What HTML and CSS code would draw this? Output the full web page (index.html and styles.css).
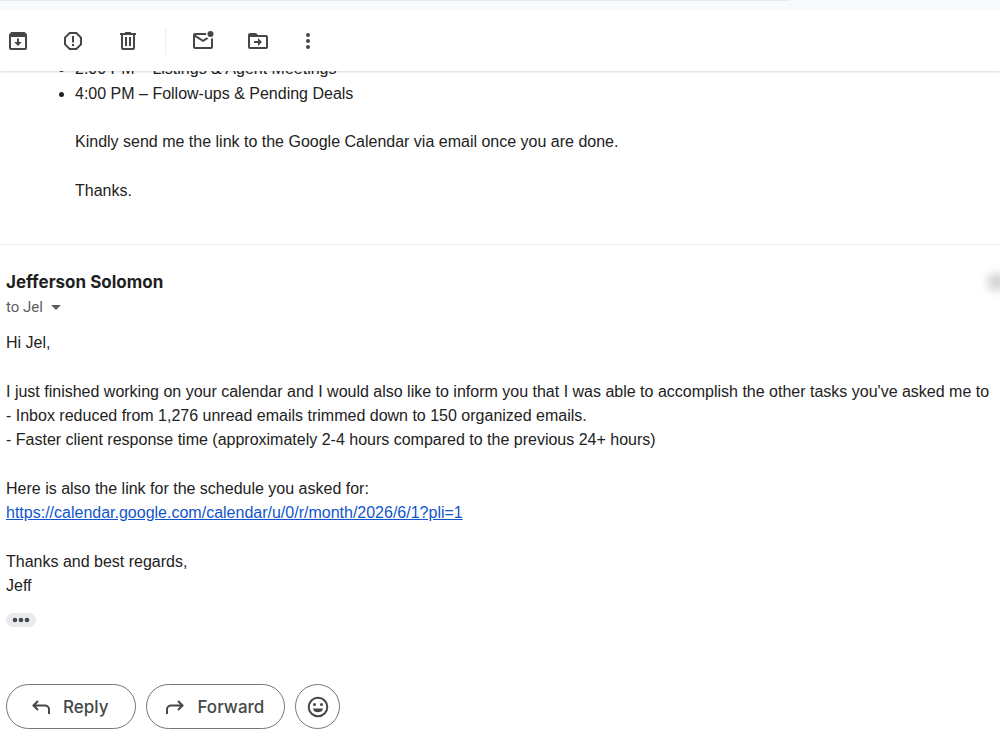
FILE: index.html
```html
<!DOCTYPE html>
<html lang="en">
	<head>
		<meta charset="utf-8">
		<title>Mail</title>
		<link rel="stylesheet" href="styles.css">
	</head>
	<body>
		<header class="top">
			<div class="searchbar"><div class="search-edge"></div></div>
			<div class="toolbar">
				<button type="button" class="tool" aria-label="Archive">
					<svg viewBox="0 0 24 24"><path d="M18.700 3H5.300L3 5.500V19a2 2 0 0 0 2 2h14a2 2 0 0 0 2-2V5.500zM19 19H5V8h14zM11 9.500h2V13h2.800L12 17l-3.800-4H11z"/></svg>
				</button>
				<button type="button" class="tool" aria-label="Report spam">
					<svg viewBox="0 0 24 24"><path fill-rule="evenodd" d="M15.730 3H8.270L3 8.270v7.460L8.270 21h7.460L21 15.730V8.270zM19 14.900L14.900 19H9.100L5 14.900V9.100L9.100 5h5.800L19 9.100zM11 7h2v6.500h-2zM11 15h2v2h-2z"/></svg>
				</button>
				<button type="button" class="tool" aria-label="Delete">
					<svg viewBox="0 0 24 24"><path fill-rule="evenodd" d="M15 4V3H9v1H4v2h1v13a2 2 0 0 0 2 2h10a2 2 0 0 0 2-2V6h1V4zM17 19H7V6h10zM9 8h2v9H9zM13 8h2v9h-2z"/></svg>
				</button>
				<span class="divider"></span>
				<button type="button" class="tool" aria-label="Mark as unread">
					<svg viewBox="0 0 24 24"><path d="M20 9.500V18H4V8l8 5 5.300-3.300-1.500-1.500L12 10.700 5 6.200V6h10.200a5 5 0 0 1 0-2H4a2 2 0 0 0-2 2v12a2 2 0 0 0 2 2h16a2 2 0 0 0 2-2V9.200a5 5 0 0 1-2 .3z"/><circle cx="19.500" cy="5" r="3"/></svg>
				</button>
				<button type="button" class="tool" aria-label="Move to">
					<svg viewBox="0 0 24 24"><path fill-rule="evenodd" d="M20 6h-8l-2-2H4a2 2 0 0 0-2 2v12a2 2 0 0 0 2 2h16a2 2 0 0 0 2-2V8a2 2 0 0 0-2-2zM20 18H4V8h16zM12 9l4 4-4 4v-3H8v-2h4z"/></svg>
				</button>
				<button type="button" class="tool more" aria-label="More">
					<svg viewBox="0 0 24 24"><circle cx="12" cy="6" r="2"/><circle cx="12" cy="12" r="2"/><circle cx="12" cy="18" r="2"/></svg>
				</button>
			</div>
		</header>
		<main class="thread">
			<article class="message previous">
				<ul class="schedule">
					<li>2:00 PM – Listings &amp; Agent Meetings</li>
					<li>4:00 PM – Follow-ups &amp; Pending Deals</li>
				</ul>
				<div class="note">
					<p>Kindly send me the link to the Google Calendar via email once you are done.</p>
					<p>Thanks.</p>
				</div>
			</article>
			<article class="message">
				<div class="sender">
					<h3 class="name">Jefferson Solomon</h3>
					<span class="date"></span>
				</div>
				<button type="button" class="recipient">to Jel
					<svg viewBox="0 0 10 5"><path d="M0 0h10L5 5z"/></svg>
				</button>
				<div class="body">
					<p>Hi Jel,</p>
					<p>I just finished working on your calendar and I would also like to inform you that I was able to accomplish the other tasks you've asked me to<br>
					- Inbox reduced from 1,276 unread emails trimmed down to 150 organized emails.<br>
					- Faster client response time (approximately 2-4 hours compared to the previous 24+ hours)</p>
					<p>Here is also the link for the schedule you asked for:<br>
					<a href="https://calendar.google.com/calendar/u/0/r/month/2026/6/1?pli=1">https://calendar.google.com/calendar/u/0/r/month/2026/6/1?pli=1</a></p>
					<p>Thanks and best regards,<br>
					Jeff</p>
				</div>
				<button type="button" class="trimmed" aria-label="Show trimmed content">
					<svg viewBox="0 0 20 6"><circle cx="4" cy="3" r="2.300"/><circle cx="10" cy="3" r="2.300"/><circle cx="16" cy="3" r="2.300"/></svg>
				</button>
				<div class="actions">
					<button type="button" class="action reply">
						<svg viewBox="0 0 20 20"><path class="line" d="M7 4L2.500 8.500 7 13M2.500 8.500H14a4 4 0 0 1 4 4V17"/></svg>
						Reply
					</button>
					<button type="button" class="action forward">
						<svg viewBox="0 0 20 20"><path class="line" d="M13 4l4.500 4.500L13 13M17.500 8.500H6a4 4 0 0 0-4 4V17"/></svg>
						Forward
					</button>
					<button type="button" class="action emoji" aria-label="Add reaction">
						<svg viewBox="0 0 24 24"><circle class="line" cx="12" cy="12" r="9.300"/><circle cx="8.500" cy="9.500" r="1.500"/><circle cx="15.500" cy="9.500" r="1.500"/><path d="M6.900 13.500h10.200a5.300 5.300 0 0 1-10.200 0z"/></svg>
					</button>
				</div>
			</article>
		</main>
	</body>
</html>
```
FILE: styles.css
```css
*{
	margin: 0;
	padding: 0;
	box-sizing: border-box;
}
body{
	background: #fff;
	color: #222;
	font: 16px/24px "Liberation Sans", Arial, sans-serif;
	overflow: hidden;
}
button{
	border: none;
	background: none;
	color: #444746;
	cursor: pointer;
}
svg{
	display: block;
	fill: currentColor;
}
.line{
	fill: none;
	stroke: currentColor;
	stroke-width: 2;
}
.top{
	position: sticky;
	top: 0;
	z-index: 1;
	background: #fff;
	box-shadow: 0 1px 2px rgba(0,0,0,.15);
}
.searchbar{
	height: 11px;
	background: #f8fafd;
}
.search-edge{
	width: 79%;
	height: 1px;
	background: #e9eaf6;
}
.toolbar{
	display: flex;
	align-items: center;
	height: 60px;
}
.tool{
	display: flex;
	justify-content: center;
	width: 36px;
	margin-right: 19px;
}
.tool svg{
	width: 24px;
	height: 24px;
}
.divider{
	width: 1px;
	height: 26px;
	margin-right: 19px;
	background: #eceef0;
}
.more{
	margin-left: -5px;
}
/* the thread is scrolled partly under the toolbar */
.thread{
	margin-top: -15px;
}
.message{
	padding: 25px 6px;
}
.previous{
	padding: 0 0 41px;
	border-bottom: 1px solid #ebedef;
}
.schedule,
.note{
	padding-left: 75px;
}
.schedule{
	margin-bottom: 24px;
}
.schedule li{
	line-height: 25px;
}
.note p,
.body p{
	margin-bottom: 25px;
}
.note p:last-child{
	margin-bottom: 0;
}
.sender{
	display: flex;
	justify-content: space-between;
	align-items: center;
}
.name{
	color: #1f1f1f;
	font: 700 17px/24px "Google Sans", Inter, sans-serif;
}
.date{
	width: 18px;
	height: 16px;
	margin-right: -12px;
	background: #d4d4d4;
	filter: blur(4px);
}
.recipient{
	display: flex;
	align-items: center;
	gap: 8px;
	margin: 1px 0 12px;
	color: #5e5e5e;
	font: 15px/24px Roboto, sans-serif;
}
.recipient svg{
	width: 10px;
	height: 5px;
}
.body{
	white-space: nowrap;
}
.body a{
	color: #15c;
}
.trimmed{
	display: flex;
	justify-content: center;
	align-items: center;
	width: 30px;
	height: 14px;
	margin-top: -10px;
	border-radius: 7px;
	background: #e8eaed;
}
.trimmed svg{
	width: 20px;
	height: 6px;
}
.actions{
	display: flex;
	gap: 10px;
	margin-top: 57px;
}
.action{
	display: flex;
	align-items: center;
	gap: 12px;
	height: 45px;
	border: 1px solid #747775;
	border-radius: 23px;
	font: 500 17px/24px "Google Sans", Inter, sans-serif;
}
.action svg{
	width: 20px;
	height: 20px;
}
.reply{
	padding: 0 27px 0 24px;
}
.forward{
	padding: 0 20px 0 18px;
}
.emoji{
	justify-content: center;
	width: 45px;
}
.emoji svg{
	width: 24px;
	height: 24px;
}
```
